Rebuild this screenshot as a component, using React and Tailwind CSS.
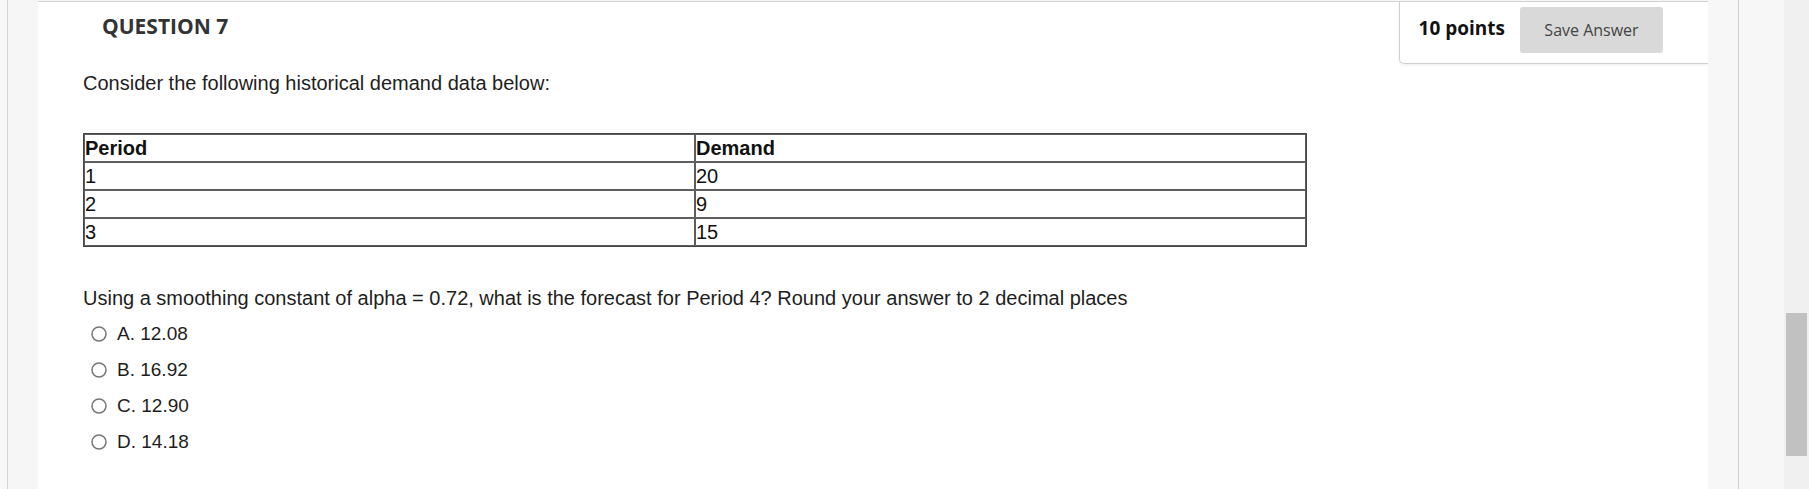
import React from 'react';

const options = [
  { id: 'a', label: 'A. 12.08' },
  { id: 'b', label: 'B. 16.92' },
  { id: 'c', label: 'C. 12.90' },
  { id: 'd', label: 'D. 14.18' },
];

const rows = [
  { period: '1', demand: '20' },
  { period: '2', demand: '9' },
  { period: '3', demand: '15' },
];

function Radio() {
  return (
    <svg width="16" height="16" viewBox="0 0 16 16" className="shrink-0">
      <circle cx="8" cy="8" r="7" fill="#fff" stroke="#767676" strokeWidth="1.5" />
    </svg>
  );
}

export default function App() {
  return (
    <div className="flex h-[489px] w-[1809px] overflow-hidden bg-[#f6f6f6]">
      <div className="w-[8px] border-r border-[#d4d4d4] bg-[#f8f8f8]" />
      <div className="w-[30px]" />

      {/* Question card */}
      <main className="mt-px w-[1670px] border-t border-[#d2d2d2] bg-white font-['Liberation_Sans',Arial,sans-serif] text-[#1e1e1e]">
        <div className="flex items-start justify-between">
          <h2 className="pl-[64px] pt-[10px] font-['Open_Sans',sans-serif] text-[21px] font-bold leading-[28px] text-[#333]">
            QUESTION 7
          </h2>
          <div className="flex h-[62px] w-[309px] items-start justify-end gap-[15px] rounded-bl-[5px] border-b border-l border-[#d0d0d0] pr-[45px] pt-[5px] shadow-[0_1px_3px_rgba(0,0,0,0.08)] font-['Open_Sans',sans-serif]">
            <span className="mt-[8px] text-[19px] font-bold leading-[26px] text-[#111]">10 points</span>
            <button className="h-[46px] w-[143px] rounded-[3px] bg-[#d9d9d9] text-[16px] text-[#444]">
              Save Answer
            </button>
          </div>
        </div>

        <div className="pl-[45px]">
          <p className="mt-[8px] text-[20px] leading-[23px]">
            Consider the following historical demand data below:
          </p>

          <table className="mt-[38px] w-[1224px] border-separate border-spacing-0 border border-[#444] text-[20px] leading-[26px] text-[#111]">
            <thead>
              <tr>
                <th className="w-1/2 border border-[#5e5e5e] p-0 text-left font-bold">Period</th>
                <th className="w-1/2 border border-[#5e5e5e] p-0 text-left font-bold">Demand</th>
              </tr>
            </thead>
            <tbody>
              {rows.map((r) => (
                <tr key={r.period}>
                  <td className="border border-[#5e5e5e] p-0">{r.period}</td>
                  <td className="border border-[#5e5e5e] p-0">{r.demand}</td>
                </tr>
              ))}
            </tbody>
          </table>

          <p className="mt-[40px] text-[20px] leading-[23px]">
            Using a smoothing constant of alpha = 0.72, what is the forecast for Period 4? Round your answer to 2 decimal places
          </p>

          <ul className="mt-[6px] pl-[8px]">
            {options.map((o) => (
              <li key={o.id} className="flex h-[36px] items-center gap-[10px]">
                <Radio />
                <span className="text-[19px] leading-[22px]">{o.label}</span>
              </li>
            ))}
          </ul>
        </div>
      </main>

      <div className="w-[31px] border-r border-[#cfcfcf] bg-[#f7f7f7]" />
      <div className="w-[45px] bg-[#f7f7f7]" />

      {/* scrollbar */}
      <div className="w-[25px] bg-[#f0f0f0]">
        <div className="ml-[2px] mt-[313px] h-[143px] w-[21px] bg-[#c1c1c1]" />
      </div>
    </div>
  );
}
